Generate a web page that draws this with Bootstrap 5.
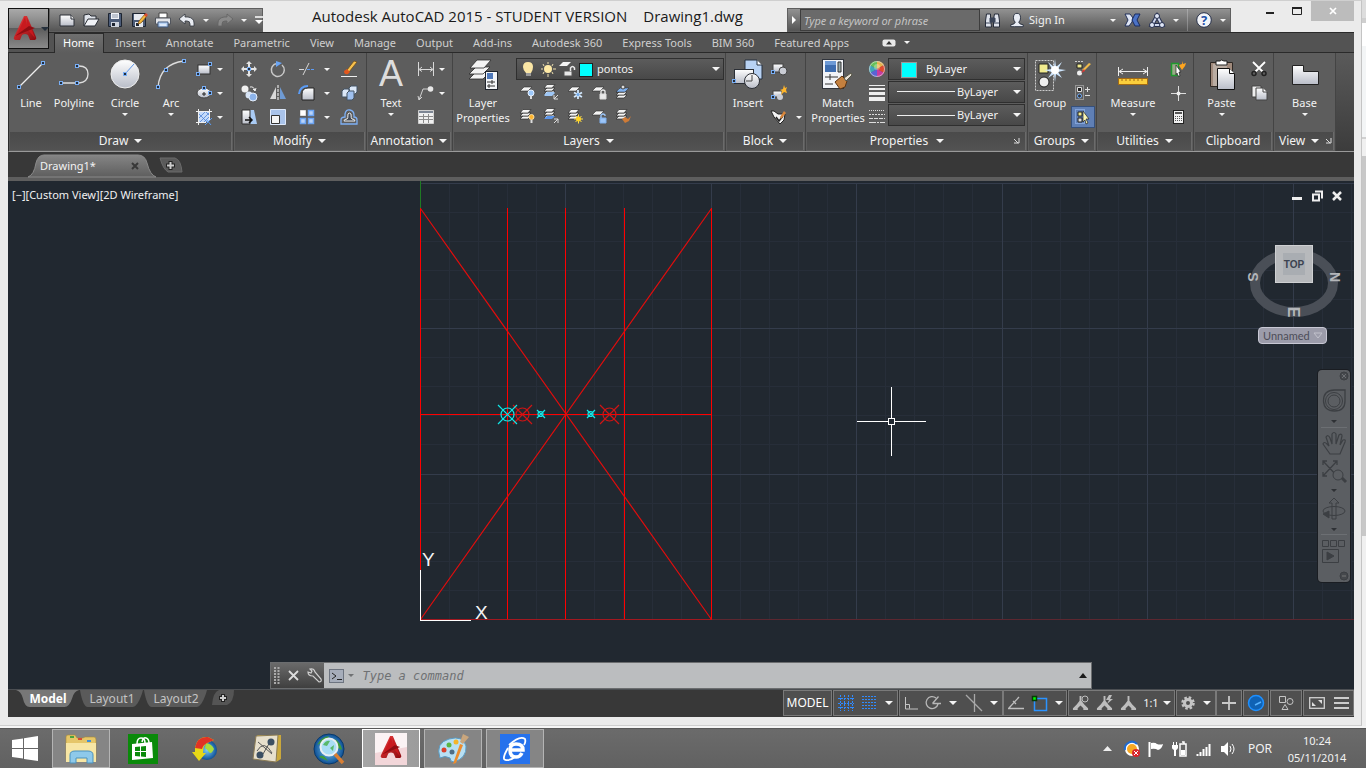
<!DOCTYPE html>
<html lang="en">
<head>
<meta charset="utf-8">
<meta name="viewport" content="width=device-width, initial-scale=1">
<title>Autodesk AutoCAD 2015 - Drawing1.dwg</title>
<link href="https://cdn.jsdelivr.net/npm/bootstrap@5.3.0/dist/css/bootstrap.min.css" rel="stylesheet">
<style>
  body{font-family:"Noto Sans","Open Sans",sans-serif;font-size:11px;line-height:16px;color:#f2f2f2;background:#ebebeb}
  button{background:none;border:0;padding:0;color:inherit;font:inherit}
  svg{display:block;flex:none;overflow:visible}
  .i16{width:16px;height:16px}
  .i32{width:32px;height:32px}
  .t12{font-size:12px}
  .car{width:0;height:0;border:3px solid transparent;border-top:3px solid #f4f4f4;border-bottom:0;flex:none}
  .car-lg{border-width:4px;border-top-width:4px;border-bottom-width:0}
  .open-sans{font-family:"Open Sans","Noto Sans",sans-serif}
  /* window frame */
  .frame{background:#ebebeb;border-top:1px solid #cfcfcf;border-right:1px solid #c4c4c4;padding:0 7px 8px 8px;border-bottom:1px solid #cfcfcf}
  .edge{width:4px;background:linear-gradient(#ddd 0 18px,#cfcfcf 18px 23px,#fff 23px 46px,#f3f5f6 46px 137px,#d0d0d0 137px 139px,#f0f0f0 139px 156px,#c8c8c8 156px 536px,#f0f0f0 536px)}
  .titlebar{height:31px}
  .barfill{background:linear-gradient(#929292,#555);border:1px solid #5f5f5f;height:24px}
  .qat{margin-left:41px;width:214px;padding-left:9px;gap:8px}
  .wintitle{font-size:15px;line-height:20px;color:#1a1a1a;padding:5px 0 0 49px;gap:16px}
  .info{width:444px}
  .search{width:180px;height:22px;background:#6a6a6a;border:1px solid #3d3d3d;color:#ddd;font-style:italic;padding:0 3px;border-radius:0}
  .search::placeholder{color:#c4c4c4;opacity:1}
  .winbtns{width:123px}
  .winclose{width:44px;height:20px;background:#bcbcbc}
  .appbtn{left:0;top:7px;width:41px;height:41px;background:linear-gradient(#a9a9a9,#7b7b7b 50%,#5c5c5c 50%,#8a8a8a);border:1px solid #111;z-index:3}
  /* ribbon */
  .rtabs{height:21px;background:#535353;border-top:1px solid #2a2a2a;border-bottom:1px solid #2a2a2a;padding-left:46px}
  .rtabs a{color:#cfcfcf;text-decoration:none;padding:2px 9px 0 11px;height:20px;white-space:nowrap}
  .rtabs a.on{color:#fff;background:linear-gradient(#6f6f6f,#5d5d5d);border:1px solid #2a2a2a;border-bottom:0;padding:1px 9px 0 8px}
  .ribbon{height:99px;background:linear-gradient(#5a5a5a,#3c3c3c);border-bottom:1px solid #9a9a9a;border-left:1px solid #2c2c2c}
  .panel{background:#5d5d5d;border-right:1px solid #444;flex:none;padding:2px 1px 1px}
  .pbody{height:77px}
  .ptitle{height:18px;background:linear-gradient(#4a4a4a,#525252);gap:6px;border-right:1px solid #6b6b6b;font-size:12px}
  .big{display:flex;flex-direction:column;align-items:center;padding-top:4px;white-space:nowrap;flex:none}
  .big .lbl{margin-top:4px;line-height:15px;text-align:center}
  .big .car{margin-top:3px}
  .tools{display:grid;grid-auto-rows:24px;align-items:center;padding-top:2px;align-content:start}
  .tools button{height:24px;display:flex;align-items:center;gap:5px}
  .combo{position:relative;background:linear-gradient(#5c5c5c,#484848);border:1px solid #2f2f2f;height:22px}
  .combo select{appearance:none;background:none;border:0;color:#f2f2f2;width:100%;height:20px;font:inherit;padding:0;display:block}
  .combo .car{position:absolute;right:3px;top:8px}
  .combo .deco{position:absolute;left:6px;top:2px;pointer-events:none}
  .w42{width:42px}.w44{width:44px}.w34{width:34px}.w58{width:58px}
  .p-draw{width:225px}.p-mod{width:133px}.p-ann{width:86px}.p-lay{width:273px}.p-blk{width:80px}.p-prop{width:222px}.p-grp{width:69px}.p-util{width:97px}.p-clip{width:80px}.p-view{width:62px}
  .hot{background:#5f7fb5;border:1px solid #35507c!important;width:24px;height:22px!important;justify-content:center}
  /* file tabs */
  .ftabs{height:25px;background:#383838;padding:3px 0 0 20px}
  .ftab{position:relative;height:22px;width:128px}
  .ftab .shape,.ltab .shape{position:absolute;inset:0;width:100%;height:100%}
  .ftab .inner{position:relative;padding:3px 13px 0 12px}
  .strip{height:4px;background:#5e5e5e}
  /* canvas */
  .paper{position:relative;background:#212830;overflow:hidden;min-height:440px}
  .draw{position:absolute;inset:0;width:100%;height:100%}
  .vlabel{position:absolute;left:4px;top:6px;color:#f0f0f0}
  .mdi{position:absolute;right:11px;top:9px;gap:8px}
  .cube{position:absolute;right:10px;top:60px}
  .ucsname{position:absolute;right:27px;top:146px;width:69px;height:17px;border:1px solid #c8c8d4;border-radius:4px;background:#9c9caa;color:#4d4d58;font:11px/14px "Lato",sans-serif;padding:0 4px}
  .navbar2{position:absolute;right:4px;top:189px;width:32px;height:212px;background:#5b5e62;border-radius:4px;box-shadow:0 0 0 1px #1a1d22}
  .cmdwrap{position:absolute;left:0;right:0;bottom:0}
  .cmd{width:61%;height:27px;border:1px solid #6b6d6f}
  .cmdleft{width:53px;background:linear-gradient(#6a6a6a,#3f3f3f);gap:5px;padding-left:3px}
  .cmdin{background:#bbbdbf;padding:0 4px 0 5px}
  .cmdin input{background:none;border:0;outline:0;font:italic 12px "DejaVu Sans Mono",monospace;color:#444;padding:0}
  .cmdin input::placeholder{color:#6f7173;opacity:1}
  /* status */
  .status{height:28px;background:#383838;border-top:1px solid #4b4e52}
  .ltab{position:relative;height:17px;width:64px;color:#c4c4c4;text-align:center}
  .ltab span{position:relative}
  .sgrp{height:26px;border:1px solid #7a7a7a;background:#4f4f4f;display:flex;align-items:center;justify-content:space-around;margin-right:1px}
  .sgrp button{flex:none}
  /* taskbar */
  .taskbar{height:40px;background:linear-gradient(#6b6b6b,#616161);border-top:1px solid #585858}
  .gapline{height:2px;background:#f5f5f5}
  .tb{width:58px;height:39px;margin-right:4px;display:flex;align-items:center;justify-content:center}
  .tb.run{background:#858585;border:1px solid #b4b4b4}
  .tb.act{background:linear-gradient(90deg,#a5a5a5,#9c9c9c);border:1px solid #fff}
  .startb{width:52px}
  .tray{gap:8px;padding-right:16px}
  .clock{width:66px;text-align:center;line-height:17px}
</style>
</head>
<body class="vh-100 d-flex flex-column overflow-hidden">
<svg width="0" height="0" class="position-absolute" aria-hidden="true">
  <defs>
    <linearGradient id="gw" x1="0" y1="0" x2="0" y2="1"><stop offset="0" stop-color="#fff"/><stop offset="1" stop-color="#b9bdc8"/></linearGradient>
    <linearGradient id="gt" x1="0" y1="0" x2="0" y2="1"><stop offset="0" stop-color="#858585"/><stop offset="1" stop-color="#5e5e5e"/></linearGradient>
    <linearGradient id="gr" x1="0" y1="0" x2="1" y2="1"><stop offset="0" stop-color="#f04040"/><stop offset="1" stop-color="#8c0a0f"/></linearGradient>
    <radialGradient id="globe"><stop offset="0" stop-color="#7fd0f5"/><stop offset="1" stop-color="#0d4f96"/></radialGradient>
    <symbol id="h" viewBox="0 0 4 4"><rect x=".5" y=".5" width="3" height="3" fill="#222d3c" stroke="#78aef5"/></symbol>
    <symbol id="sheet" viewBox="0 0 16 16"><path d="M5 3h8l-4 4H1z" fill="#f4f4f4" stroke="#2b2b2b" stroke-width=".6"/></symbol>
    <symbol id="stack" viewBox="0 0 16 16"><path d="M4 8h8l-3 3H1z" fill="#f4f4f4" stroke="#2b2b2b" stroke-width=".7"/><path d="M4 5h8l-3 3H1z" fill="#f4f4f4" stroke="#2b2b2b" stroke-width=".7"/><path d="M4 1.500h8l-3 3.500H1z" fill="#f4f4f4" stroke="#2b2b2b" stroke-width=".7"/></symbol>
    <symbol id="acad" viewBox="0 0 24 26"><path d="M11 0h3l9 21q1 2-1 3h-5l-2-5q-3-2-6 0l-2 5H2q-2-1-1-3z" fill="url(#gr)"/><path d="M12 1l2 9-6 7-6 6 6-13zM14 2l8 20-8-9z" fill="#c9191e"/><path d="M2 20l20-8-6-2z" fill="#8f0d12"/></symbol>
    <symbol id="person" viewBox="0 0 18 17"><path d="M6 16H2v-2q5-1 5-3Q5 9 5 6q0-5 4-5t4 5q0 3-2 5 0 2 5 3v2z" fill="#e9edf5" stroke="#222a3a"/></symbol>
    <symbol id="compass" viewBox="0 0 18 18"><path d="M8 1h2v5l3 4 4 4v2h-5v-2l-3-3-3 3v2H1v-2l4-4 3-4z" fill="#bdbdbd"/></symbol>
  </defs>
</svg>

<div class="d-flex flex-grow-1 overflow-hidden">
<main class="frame flex-grow-1 d-flex flex-column position-relative">
  <div class="position-relative">
  <button class="appbtn position-absolute d-flex align-items-center" aria-label="Application menu">
    <svg width="24" height="26" class="ms-1"><use href="#acad"/></svg><i class="car car-lg ms-1" style="border-top-color:#25303c"></i>
  </button>
  <header class="titlebar d-flex">
    <div class="qat barfill d-flex align-items-center align-self-end">
      <button aria-label="New"><svg class="i16" viewBox="0 0 16 16"><path d="M1 3h11l3 4v7H1z" fill="url(#gw)" stroke="#2b2f36"/><path d="M12 3v4h3" fill="#fff" stroke="#2b2f36"/></svg></button>
      <button aria-label="Open"><svg class="i16" viewBox="0 0 16 16"><path d="M1 14V3l5-1 2 2h5v4" fill="#dfe3ea" stroke="#2b2f36"/><path d="M1 14l4-7h11l-4 7z" fill="#f0f2f6" stroke="#2b2f36"/></svg></button>
      <button aria-label="Save"><svg class="i16" viewBox="0 0 16 16"><path d="M1.500 1.500h13v13h-13z" fill="#4c5c78" stroke="#1d2430"/><path d="M4 1h8v6H4z" fill="#f0f2f6"/><path d="M5 3h6M5 5h6" stroke="#8c96a8"/><path d="M4 10h8v5H4z" fill="#cdd3de"/><path d="M5 11h3v3H5z" fill="#1d2430"/></svg></button>
      <button aria-label="Save as"><svg class="i16" viewBox="0 0 16 16"><path d="M1.500 1.500h13v13h-13z" fill="#4c5c78" stroke="#1d2430"/><path d="M3 2h10v6H3zM4 10h8v5H4z" fill="#e6e9ef"/><path d="M5 11h3v3H5z" fill="#1d2430"/><path d="M7 12l1-3 6-7 2 2-6 7z" fill="#f3b63c" stroke="#7a4a10" stroke-width=".7"/><path d="M13 3l2-2 2 2-2 2z" fill="#d84b31"/></svg></button>
      <button aria-label="Plot"><svg class="i16" viewBox="0 0 16 16"><path d="M4 1h8v5H4z" fill="#fff" stroke="#444"/><path d="M.5 6h15v6H.5z" fill="#e4e6ea" stroke="#50545c"/><path d="M3 10h10v5H3z" fill="#b9d4f6" stroke="#40587c"/><path d="M5 13h6" stroke="#fff"/></svg></button>
      <button aria-label="Undo"><svg class="i16" viewBox="0 0 16 16"><path d="M0 7l6-5v3h3q6 1 6 6v3h-4v-2q0-3-3-3H6v3z" fill="#e9ecf2" stroke="#30353e" stroke-width=".8"/></svg></button>
      <i class="car"></i>
      <button aria-label="Redo"><svg class="i16" viewBox="0 0 16 16"><path d="M16 7l-6-5v3H7q-6 1-6 6v3h4v-2q0-3 3-3h2v3z" fill="#8a8a8a" stroke="#626262" stroke-width=".8"/></svg></button>
      <i class="car"></i>
      <button aria-label="Customize"><svg width="8" height="8"><path d="M0 1h8" stroke="#fff" stroke-width="1.500"/><path d="M0 4h8l-4 4z" fill="#fff"/></svg></button>
    </div>
    <div class="wintitle open-sans flex-grow-1 d-flex text-nowrap"><span>Autodesk AutoCAD 2015 - STUDENT VERSION</span><span>Drawing1.dwg</span></div>
    <div class="info barfill d-flex align-items-center align-self-end">
      <svg width="12" height="10" viewBox="0 0 12 10"><path d="M4 1l4 4-4 4z" fill="#fff"/></svg>
      <input class="search" type="text" placeholder="Type a keyword or phrase" aria-label="Search">
      <button class="ms-1" aria-label="Find"><svg width="17" height="16" viewBox="0 0 17 16"><path d="M2.500 2h4v5l1 8h-6V9zM10.500 2h4l1 7v6h-6V7z" fill="#dfe3ec" stroke="#262c3a"/><path d="M6 6h5v4H6zM2 11h5M10 11h5" fill="#3b4558" stroke="#3b4558"/></svg></button>
      <button class="d-flex align-items-center ms-2"><svg width="16" height="16"><use href="#person"/></svg><span class="ms-1 text-nowrap">Sign In</span></button>
      <i class="car ms-auto"></i>
      <button class="ms-2" aria-label="Exchange"><svg width="17" height="14" viewBox="0 0 17 14"><path d="M1 1h5l3 4-1 4-3 4H1l3-6z" fill="#dfe6f5" stroke="#22305a"/><path d="M16 1h-5L8 7l3 6h5l-3-6z" fill="#4b72c6" stroke="#1b2c60"/></svg></button>
      <button class="ms-2" aria-label="Stay connected"><svg width="16" height="15" viewBox="0 0 16 15"><path d="M8 3l5 9H3z" fill="none" stroke="#262f4e" stroke-width="4"/><path d="M8 3l5 9H3z" fill="none" stroke="#cfd8ee" stroke-width="2"/><circle cx="8" cy="3" r="2.500" fill="#dfe6f5" stroke="#262f4e"/><circle cx="3" cy="12" r="2.500" fill="#dfe6f5" stroke="#262f4e"/><circle cx="13" cy="12" r="2.500" fill="#dfe6f5" stroke="#262f4e"/></svg></button>
      <i class="car ms-2"></i><span class="vr mx-2 bg-light"></span>
      <button aria-label="Help"><svg width="16" height="16" viewBox="0 0 16 16"><circle cx="8" cy="8" r="7.300" fill="#f2f4f8" stroke="#26304a"/><text x="8" y="13" text-anchor="middle" font-size="13" font-weight="700" fill="#1d50a8">?</text></svg></button>
      <i class="car ms-2 me-1"></i>
    </div>
    <div class="winbtns d-flex justify-content-end">
      <svg width="80" height="20" viewBox="0 0 80 20"><path d="M35 12h8" stroke="#222" stroke-width="2"/><path d="M61.500 6.500h9v7h-9z" fill="none" stroke="#222"/><path d="M61 7h10" stroke="#222" stroke-width="2"/></svg>
      <button class="winclose d-flex align-items-center justify-content-center" aria-label="Close"><svg width="8" height="8"><path d="M1 1l6 6M7 1l-6 6" stroke="#fff" stroke-width="1.700"/></svg></button>
    </div>
  </header>
  <nav class="rtabs d-flex">
    <a href="#" class="on">Home</a><a href="#">Insert</a><a href="#">Annotate</a><a href="#">Parametric</a><a href="#">View</a><a href="#">Manage</a><a href="#">Output</a><a href="#">Add-ins</a><a href="#">Autodesk 360</a><a href="#">Express Tools</a><a href="#">BIM 360</a><a href="#">Featured Apps</a>
    <button class="d-flex align-items-center gap-2 ms-4" aria-label="Minimize ribbon"><svg width="14" height="8"><rect x=".5" y=".5" width="13" height="7" rx="2" fill="#e8e8e8"/><path d="M4 5.500h6L7 2z" fill="#333"/></svg><i class="car"></i></button>
  </nav>
  </div>

  <section class="ribbon d-flex">
    <div class="panel p-draw"><div class="pbody d-flex">
      <button class="big w42"><svg class="i32" viewBox="0 0 32 32"><path d="M4 28L28 4" stroke="#eee" stroke-width="1.300"/><use href="#h" x="2" y="26" width="4" height="4"/><use href="#h" x="26" y="2" width="4" height="4"/></svg><span class="lbl">Line</span></button>
      <button class="big w44"><svg class="i32" viewBox="0 0 32 32"><path d="M4 24h17q9-1 9-9t-9-8h-2" fill="none" stroke="#ddd" stroke-width="1.300"/><use href="#h" x="1" y="22" width="4" height="4"/><use href="#h" x="17" y="22" width="4" height="4"/><use href="#h" x="17" y="5" width="4" height="4"/></svg><span class="lbl">Polyline</span></button>
      <button class="big w58"><svg class="i32" viewBox="0 0 32 32"><circle cx="16" cy="15" r="14" fill="url(#gw)" stroke="#eee"/><path d="M16 15l9-10" stroke="#5b95e8"/><use href="#h" x="14" y="13" width="4" height="4"/></svg><span class="lbl">Circle</span><i class="car"></i></button>
      <button class="big w34"><svg class="i32" viewBox="0 0 32 32"><path d="M3 28Q5 5 29 2" fill="none" stroke="#ddd" stroke-width="1.300"/><use href="#h" x="1" y="26" width="4" height="4"/><use href="#h" x="9" y="9" width="4" height="4"/><use href="#h" x="27" y="0" width="4" height="4"/></svg><span class="lbl">Arc</span><i class="car"></i></button>
      <div class="tools ms-2">
        <button aria-label="Rectangle"><svg class="i16" viewBox="0 0 16 16"><rect x="2" y="4" width="12" height="9" fill="url(#gw)" stroke="#333"/><use href="#h" x="0" y="11" width="4" height="4"/><use href="#h" x="12" y="1" width="4" height="4"/></svg><i class="car"></i></button>
        <button aria-label="Ellipse"><svg class="i16" viewBox="0 0 16 16"><ellipse cx="8" cy="8" rx="7" ry="5" fill="url(#gw)" stroke="#444"/><path d="M6 9h4M8 7v4" stroke="#222"/><use href="#h" x="6" y="1" width="4" height="4"/><use href="#h" x="12" y="6" width="4" height="4"/></svg><i class="car"></i></button>
        <button aria-label="Hatch"><svg class="i16" viewBox="0 0 16 16"><path d="M3 3h10v10H3z" fill="#c5dbfa"/><path d="M3 9l6-6M4 13l9-9M8 13l5-5M10 3l3 3M3 5l8 8" stroke="#3f78d0" stroke-width=".7"/><path d="M2.500 0v16M13.500 0v12M0 2.500h16M0 13.500h10" stroke="#f0f0f0" fill="none"/><path d="M9 16l7-7M10 10l5 6" stroke="#5b9cf0"/></svg><i class="car"></i></button>
      </div></div>
      <div class="ptitle d-flex align-items-center justify-content-center">Draw<i class="car car-lg"></i></div></div>

    <div class="panel p-mod"><div class="pbody tools" style="grid-template-columns:29px 29px 42px 20px;padding-left:6px">
      <button aria-label="Move"><svg class="i16" viewBox="0 0 16 16"><path d="M8 0l3 3H9v3H7V3H5zM8 16l3-3H9v-3H7v3H5zM0 8l3-3v2h3v2H3v2zM16 8l-3-3v2h-3v2h3v2z" fill="#e4e4e4"/><use href="#h" x="6" y="6" width="4" height="4"/></svg></button>
      <button aria-label="Rotate"><svg class="i16" viewBox="0 0 16 16"><path d="M7 2.500A6.500 6.500 0 1 0 12 4" fill="none" stroke="#c9c9c9" stroke-width="1.500"/><path d="M6 0l6 2-6 4z" fill="#6aa5f5"/></svg></button>
      <button aria-label="Trim"><svg class="i16" viewBox="0 0 16 16"><path d="M0 8.500h5M4 14L10 2" stroke="#d8d8d8"/><path d="M8 8.500h8" stroke="#5d9cf5" stroke-dasharray="3 1"/></svg><i class="car ms-1"></i></button>
      <button aria-label="Erase"><svg class="i16" viewBox="0 0 16 16"><path d="M6 9L13 0l3 1-8 10z" fill="#f7c14d" stroke="#6b4714" stroke-width=".7"/><path d="M3 10l3-2 3 3-2 2q-4 1-4-3z" fill="#e2571d"/><path d="M0 15.500h16" stroke="#eee"/></svg></button>
      <button aria-label="Copy"><svg class="i16" viewBox="0 0 16 16"><circle cx="4" cy="4" r="3.500" fill="#f0f0f0"/><circle cx="8" cy="10" r="3.500" fill="#d7e4f5"/><circle cx="12" cy="12" r="4" fill="#8db4ea" stroke="#e3edfb"/><path d="M9 2q4-1 5 4M12 4l2 2 1-3" fill="none" stroke="#eee"/></svg></button>
      <button aria-label="Mirror"><svg class="i16" viewBox="0 0 16 16"><path d="M6 2v12H0z" fill="#d9d9d9"/><path d="M10 2v12h6z" fill="#6f9bd4"/><path d="M8 0v16" stroke="#fff" stroke-dasharray="3 1"/></svg></button>
      <button aria-label="Fillet"><svg class="i16" viewBox="0 0 16 16"><path d="M3 15V9q0-6 6-6h6v12z" fill="url(#gw)" stroke="#222"/><path d="M0 9Q1 1 9 1" fill="none" stroke="#5b9cf5" stroke-width="2"/></svg><i class="car ms-1"></i></button>
      <button aria-label="Explode"><svg class="i16" viewBox="0 0 16 16"><path d="M1 6l2-2h5v6l-2 2H1zM8 3l2-2h6v6l-2 2H9z" fill="#dce8f8" stroke="#456"/><path d="M6 8l2-2h5v7l-2 2H6z" fill="#9fc0ee" stroke="#456"/></svg></button>
      <button aria-label="Stretch"><svg class="i16" viewBox="0 0 16 16"><path d="M9 1h4l3 14H9z" fill="#a9caf3"/><path d="M1 1h8v14H1z" fill="url(#gw)" stroke="#333"/><path d="M4 11h6M8 8l3 3-3 3" fill="none" stroke="#111" stroke-width="1.500"/></svg></button>
      <button aria-label="Scale"><svg class="i16" viewBox="0 0 16 16"><path d="M.5.500h15v15H.5z" fill="#a9c3ea" stroke="#dde8fa"/><path d="M1.500 6.500h8v8h-8z" fill="#f4f4f4" stroke="#333"/></svg></button>
      <button aria-label="Array"><svg class="i16" viewBox="0 0 16 16"><path d="M1.500 1.500h5v5h-5z" fill="#fff" stroke="#ddd"/><path d="M9.500 1.500h5v5h-5zM1.500 9.500h5v5h-5zM9.500 9.500h5v5h-5z" fill="#b9d3f8" stroke="#6ba4f2" stroke-width="1.500"/></svg><i class="car ms-1"></i></button>
      <button aria-label="Offset"><svg class="i16" viewBox="0 0 16 16"><path d="M0 15v-4q0-3 4-3V5q1-5 5-4t4 5v2q3 0 3 3v4z" fill="none" stroke="#7eb0f5" stroke-width="1.300"/><path d="M3 12q0-2 3-2 1 0 1-5 1-2 3 0 0 5 1 5 3 0 3 2z" fill="#424a56" stroke="#eee"/></svg></button>
      </div>
      <div class="ptitle d-flex align-items-center justify-content-center">Modify<i class="car car-lg"></i></div></div>

    <div class="panel p-ann"><div class="pbody d-flex">
      <button class="big" style="width:46px"><svg class="i32" viewBox="0 0 32 32"><text x="16" y="27" text-anchor="middle" font-family="Liberation Sans, sans-serif" font-size="36" fill="#ddd">A</text></svg><span class="lbl">Text</span><i class="car"></i></button>
      <div class="tools ms-1">
        <button aria-label="Dimension"><svg class="i16" viewBox="0 0 16 16"><path d="M.5 1v14M15.500 1v14M2 8.500h12M4 6L1 8.500l3 2M12 6l3 2.500-3 2" fill="none" stroke="#d8d8d8"/></svg><i class="car"></i></button>
        <button aria-label="Leader"><svg class="i16" viewBox="0 0 16 16"><path d="M1 15L5 4h5M0 11l1 4 3-3" fill="none" stroke="#d0d0d0"/><circle cx="12.500" cy="4" r="2.800" fill="#e8e8e8"/></svg><i class="car"></i></button>
        <button aria-label="Table"><svg class="i16" viewBox="0 0 16 16"><path d="M.5 1.500h15v13H.5z" fill="#f0f0f0" stroke="#d0d0d0"/><path d="M1 2h14v2H1z" fill="#7d8694"/><path d="M1 7.500h14M1 10.500h14M5.500 5v9M10.500 5v9" stroke="#8b8b8b"/></svg></button>
      </div></div>
      <div class="ptitle d-flex align-items-center justify-content-center">Annotation<i class="car car-lg"></i></div></div>

    <div class="panel p-lay"><div class="pbody d-flex">
      <button class="big w58 me-1"><svg class="i32" viewBox="0 0 32 32"><g fill="#f4f4f4" stroke="#2b2b2b" stroke-width=".8"><path d="M9 13h14l-7 7H2z"/><path d="M9 8h14l-7 7H2z"/><path d="M10 1h14l-7 8H3z"/></g><rect x="18.500" y="12.500" width="12" height="18" fill="#f3f5f8" stroke="#1f242d"/><path d="M20 14h6v6h-6z" fill="#4f79bb"/><path d="M20 23h8M20 27h8M25 21v4M22 25v4" stroke="#333"/></svg><span class="lbl">Layer<br>Properties</span></button>
      <div>
        <div class="combo" style="width:208px;margin-top:3px"><select aria-label="Layer" style="padding-left:80px"><option>pontos</option></select>
          <span class="deco"><svg width="76" height="17" viewBox="0 0 76 17"><path d="M5 1q5 0 5 5 0 3-2 6H3Q0 9 0 6q0-5 5-5z" fill="#fbe6a5"/><path d="M3 12h5v3H3z" fill="#999"/><circle cx="25" cy="8" r="4" fill="#ffeaa6"/><path d="M25 1v2M25 13v3M18 8h2M30 8h3M20 3l1 2M30 3l-1 2M20 13l1-2M30 13l-1-2" stroke="#eee0b0"/><path d="M40 1h8l-4 4h-8z" fill="#f4f4f4"/><path d="M41 10h8v5h-8z" fill="#e8e8e8" stroke="#555"/><path d="M47.500 10V7q2-3 4 0v2" fill="none" stroke="#e8e8e8" stroke-width="1.500"/><rect x="56.500" y="2.500" width="13" height="13" fill="#0ff" stroke="#222"/></svg></span><i class="car car-lg"></i></div>
        <div class="tools p-0" style="grid-template-columns:repeat(5,24px);padding-left:3px!important">
          <button aria-label="Off"><svg class="i16" viewBox="0 0 16 16"><use href="#sheet"/><circle cx="12" cy="9" r="3" fill="#9cc8fa" stroke="#e8f2ff"/><path d="M11 12h2v3h-2z" fill="#ddd"/></svg></button>
          <button aria-label="Isolate"><svg class="i16" viewBox="0 0 16 16"><path d="M4 9h8l-3 3H1z" fill="#9fc7f5"/><use href="#stack" y="-1"/><path d="M4 8h8l-3 3H1z" fill="#9fc7f5"/><path d="M15 11l-4 4M11 11v4h4" stroke="#ddd" fill="none"/></svg></button>
          <button aria-label="Freeze"><svg class="i16" viewBox="0 0 16 16"><use href="#sheet"/><path d="M11 6v9M7 8.500l8 4.500M7 13l8-4.500" stroke="#d3e9ff" stroke-width="1.800"/><circle cx="11" cy="10.500" r="1.500" fill="#6fa8ea"/></svg></button>
          <button aria-label="Lock"><svg class="i16" viewBox="0 0 16 16"><use href="#sheet"/><path d="M9 10h6v5H9z" fill="#e8e8e8" stroke="#ddd"/><path d="M10 10V7q2-2 4 0v3" fill="none" stroke="#e8e8e8" stroke-width="1.300"/></svg></button>
          <button aria-label="Make current"><svg class="i16" viewBox="0 0 16 16"><use href="#stack" y="3"/><path d="M5 4h9l-4 4H1z" fill="#7fb0ee" stroke="#2b2b2b" stroke-width=".5"/><circle cx="8" cy="3" r="2" fill="#ddd" stroke="#444"/></svg></button>
          <button aria-label="On"><svg class="i16" viewBox="0 0 16 16"><use href="#stack"/><circle cx="12.500" cy="9" r="2.500" fill="#ffb52e" stroke="#ffe0a0"/><path d="M11.500 12h2v3h-2z" fill="#ddd"/></svg></button>
          <button aria-label="Unisolate"><svg class="i16" viewBox="0 0 16 16"><use href="#stack" y="-1"/><path d="M4 8h8l-3 3H1z" fill="#5b95ea"/><path d="M11 15l4-4M11 11h4v4" stroke="#ddd" fill="none"/></svg></button>
          <button aria-label="Thaw"><svg class="i16" viewBox="0 0 16 16"><use href="#stack"/><path d="M11.500 6.500v9M7 11h9M8.500 8l6 6M14.500 8l-6 6" stroke="#ffe04f"/><circle cx="11.500" cy="11" r="2.500" fill="#ffd21f"/></svg></button>
          <button aria-label="Unlock"><svg class="i16" viewBox="0 0 16 16"><use href="#sheet"/><path d="M9 10h6v5H9z" fill="#9cc5f7" stroke="#7fb0ee"/><path d="M10 10V7q2-2 4 0v1" fill="none" stroke="#9cc5f7" stroke-width="1.300"/></svg></button>
          <button aria-label="Match layer"><svg class="i16" viewBox="0 0 16 16"><use href="#stack"/><path d="M7 11l3-2 3 2 3-3-2 5-4 2z" fill="#cf7b36"/></svg></button>
        </div>
      </div></div>
      <div class="ptitle d-flex align-items-center justify-content-center">Layers<i class="car car-lg"></i></div></div>

    <div class="panel p-blk"><div class="pbody d-flex">
      <button class="big w42"><svg class="i32" viewBox="0 0 32 32"><path d="M13 1h12l5 5v14H13z" fill="#b8d2f4" stroke="#26303e"/><path d="M25 1v5h5" fill="#fff" stroke="#26303e"/><rect x="2.500" y="10.500" width="19" height="14" fill="url(#gw)" stroke="#2b2f36"/><circle cx="20" cy="22" r="7.500" fill="url(#gw)" stroke="#2b2f36"/><path d="M20 22v-6M20 22h-6" stroke="#444"/><use href="#h" x="0" y="20" width="4" height="4"/></svg><span class="lbl">Insert</span></button>
      <div class="tools" style="padding-left:2px">
        <button aria-label="Create block"><svg class="i16" viewBox="0 0 16 16"><rect x="2" y="3" width="10" height="8" fill="url(#gw)" stroke="#444"/><circle cx="12" cy="10" r="4" fill="#c9ccd4" stroke="#444"/><use href="#h" x="0" y="9" width="4" height="4"/></svg></button>
        <button aria-label="Edit block"><svg class="i16" viewBox="0 0 16 16"><rect x="2" y="6" width="9" height="6" fill="url(#gw)" stroke="#444"/><circle cx="9" cy="12" r="3" fill="#c9ccd4"/><use href="#h" x="0" y="10" width="4" height="4"/><path d="M13 0l1 3 2-1-1 3 1 3-3-1-3 3 1-4-2-1 3-1z" fill="#ffb52a"/></svg></button>
        <button aria-label="Attributes"><svg class="i16" viewBox="0 0 16 16"><path d="M0 2h3l4 3h7l-1 6-4 4-6-7z" fill="#f4f4f4" stroke="#222"/><path d="M5 8l3 4 4-5" stroke="#222" fill="none" stroke-width="1.500"/><path d="M9 8l4-6 2 2-5 6z" fill="#d9863a"/></svg><i class="car ms-1"></i></button>
      </div></div>
      <div class="ptitle d-flex align-items-center justify-content-center">Block<i class="car car-lg"></i></div></div>

    <div class="panel p-prop"><div class="pbody d-flex">
      <button class="big" style="width:62px"><svg class="i32" viewBox="0 0 32 32"><rect x=".5" y=".5" width="21" height="29" fill="#f1f3f7" stroke="#30343c"/><path d="M3 2h11v11H3z" fill="#3d6db0"/><path d="M3 2h11v4H3z" fill="#6d9ad6"/><path d="M16 3h3v10h-3zM3 18h13M8 15v6M3 25h8" fill="#9aa" stroke="#333"/><path d="M13 23l7-6 5 5-2 6-5 2z" fill="#c4803f" stroke="#5d3411"/><path d="M22 19l7-5 1 2-6 6z" fill="#e7e0d6" stroke="#554"/></svg><span class="lbl">Match<br>Properties</span></button>
      <div class="tools p-0" style="margin-top:2px"><svg class="i16 my-auto" viewBox="0 0 16 16"><path d="M8 8V0a8 8 0 0 1 7 4z" fill="#e9b24a"/><path d="M8 8l7-4a8 8 0 0 1 0 8z" fill="#e04a2f"/><path d="M8 8l7 4a8 8 0 0 1-7 4z" fill="#c93ba0"/><path d="M8 8v8a8 8 0 0 1-7-4z" fill="#5a63d6"/><path d="M8 8l-7 4a8 8 0 0 1 0-8z" fill="#3fa6b9"/><path d="M8 8L1 4a8 8 0 0 1 7-4z" fill="#66c158"/><circle cx="8" cy="8" r="7.500" fill="none" stroke="#d5d5d5" stroke-width=".7"/><circle cx="8" cy="6" r="3" fill="#fff" opacity=".3"/></svg>
      <svg class="i16" viewBox="0 0 16 16"><path d="M0 .5h16" stroke="#eee"/><path d="M0 4h16" stroke="#eee" stroke-width="2"/><path d="M0 8.500h16" stroke="#eee" stroke-width="3"/><path d="M0 14h16" stroke="#eee" stroke-width="4"/></svg>
      <svg class="i16" viewBox="0 0 16 16"><path d="M0 1.500h16" stroke="#ddd" stroke-dasharray="1 1"/><path d="M0 5.500h16" stroke="#ddd" stroke-dasharray="2 1"/><path d="M0 9.500h16" stroke="#ddd" stroke-dasharray="4 1"/><path d="M0 13.500h16" stroke="#ddd" stroke-dasharray="7 1 2 1"/></svg></div>
      <div class="d-grid align-content-start" style="width:137px;gap:1px;margin:3px 0 0 3px">
        <div class="combo"><select aria-label="Color" style="padding-left:37px"><option>ByLayer</option></select><span class="deco"><svg width="28" height="17"><rect x="6.500" y="1.500" width="15" height="15" fill="#0ff" stroke="#999"/></svg></span><i class="car car-lg"></i></div>
        <div class="combo"><select aria-label="Lineweight" style="padding-left:68px"><option>ByLayer</option></select><span class="deco"><svg width="60" height="16"><path d="M2 7.500h58" stroke="#eee"/></svg></span><i class="car car-lg"></i></div>
        <div class="combo"><select aria-label="Linetype" style="padding-left:68px"><option>ByLayer</option></select><span class="deco"><svg width="60" height="16"><path d="M2 8.500h58" stroke="#eee"/></svg></span><i class="car car-lg"></i></div>
      </div></div>
      <div class="ptitle d-flex align-items-center"><span class="flex-grow-1 d-flex align-items-center justify-content-center gap-2">Properties<i class="car car-lg"></i></span><svg width="8" height="8" class="me-1"><path d="M1 2l4 4M6 1v5H1" stroke="#ddd" fill="none"/></svg></div></div>

    <div class="panel p-grp"><div class="pbody d-flex">
      <button class="big w42"><svg class="i32" viewBox="0 0 32 32"><path d="M1.500 1.500h18v30h-18z" fill="none" stroke="#ccc" stroke-dasharray="2 1"/><path d="M5 5h9v9H5z" fill="#f1eb8e" stroke="#222"/><circle cx="10" cy="23" r="5" fill="#eee" stroke="#222"/><path d="M21 0l1 8 6-5-4 7 8 1-8 2 4 6-6-4-1 8-1-8-6 4 4-6-8-2 8-1-4-7 6 5z" fill="#cfe7ff"/><circle cx="21" cy="11" r="4" fill="#fff"/></svg><span class="lbl">Group</span></button>
      <div class="tools">
        <button class="mx-auto" aria-label="Ungroup"><svg class="i16" viewBox="0 0 16 16"><path d="M0 .5h9" stroke="#ccc" stroke-dasharray="2 1"/><path d="M2 3h5v4H2z" fill="#f1eb8e" stroke="#222"/><circle cx="4.500" cy="12" r="2.500" fill="#eee"/><path d="M7 9l7-7 2 1-7 7z" fill="#f0ba4a"/><path d="M6 12l3-4 1 2z" fill="#d33"/></svg></button>
        <button class="mx-auto" aria-label="Group edit"><svg class="i16" viewBox="0 0 16 16"><path d="M.5.500h8v14h-8z" fill="none" stroke="#ccc" stroke-dasharray="1 1"/><path d="M2.500 2.500h4v4h-4z" fill="#222" stroke="#ddd"/><circle cx="4.500" cy="11" r="2" fill="#333" stroke="#6fa8f5"/><path d="M10 4.500h5M12.500 2v5M10 10.500h5" stroke="#ddd"/></svg></button>
        <button class="hot" aria-label="Group selection on/off"><svg class="i16" viewBox="0 0 16 16"><path d="M.5.500h9v14h-9z" fill="none" stroke="#a8cbff" stroke-dasharray="1 1"/><path d="M3 3h4v4H3z" fill="#f1eb8e" stroke="#222"/><path d="M3 9h4v4H3z" fill="#ddd" stroke="#222"/><path d="M8 2l6 8H11l2 4-2 1-1-4-2 2z" fill="#fbf7b5" stroke="#222" stroke-width=".7"/></svg></button>
      </div></div>
      <div class="ptitle d-flex align-items-center justify-content-center">Groups<i class="car car-lg"></i></div></div>

    <div class="panel p-util"><div class="pbody d-flex">
      <button class="big" style="width:70px"><svg class="i32" viewBox="0 0 32 32"><path d="M1.500 8v9M30.500 8v9M2 12.500h28M6 10l-4 2.500L6 15M26 10l4 2.500-4 2.500" stroke="#eee" fill="none"/><path d="M1.500 19.500h29v6h-29z" fill="#fbcf3c" stroke="#a46a12"/><path d="M5 19v3M9 19v3M13 19v3M17 19v3M21 19v3M25 19v3" stroke="#a46a12"/></svg><span class="lbl">Measure</span><i class="car"></i></button>
      <div class="tools" style="padding-left:2px">
        <button aria-label="Quick select"><svg class="i16" viewBox="0 0 16 16"><path d="M1.500 2.500h7v12h-7z" fill="#9a8" stroke="#1f9a2e" stroke-width="1.500"/><path d="M12 0l1 3 3-1-1 3-3 4-2-3-1-2 3-1z" fill="#ffa51f"/><path d="M6 4l5 7H9l1 4H8l-1-3-1 2z" fill="#fff" stroke="#222" stroke-width=".7"/></svg></button>
        <button aria-label="Point style"><svg class="i16" viewBox="0 0 16 16"><path d="M8.500 1v15M1 8.500h15" stroke="#ddd"/><circle cx="8.500" cy="8.500" r="2" fill="#eee"/></svg></button>
        <button aria-label="Calculator"><svg class="i16" viewBox="0 0 16 16"><rect x="3.500" y="1.500" width="10" height="13" fill="#f0f0f0" stroke="#222"/><path d="M5 3h7v2H5z" fill="#555"/><path d="M5 7.500h7M5 9.500h7M5 11.500h7" stroke="#555" stroke-dasharray="1 1"/></svg></button>
      </div></div>
      <div class="ptitle d-flex align-items-center justify-content-center">Utilities<i class="car car-lg"></i></div></div>

    <div class="panel p-clip"><div class="pbody d-flex">
      <button class="big" style="width:53px"><svg class="i32" viewBox="0 0 32 32"><path d="M4.500 3.500h22v24h-22z" fill="#a08a7c" stroke="#2e2824"/><path d="M7 5h14v22H7z" fill="#b9aca2"/><path d="M10 2h4q1-2 4 0h3v4H10z" fill="#fff" stroke="#222"/><path d="M11.500 9.500h12l5 5v16h-17z" fill="url(#gw)" stroke="#111"/><path d="M23.500 9.500v5h5" fill="#fff" stroke="#111"/></svg><span class="lbl">Paste</span><i class="car"></i></button>
      <div class="tools" style="padding-left:3px">
        <button aria-label="Cut"><svg class="i16" viewBox="0 0 16 16"><path d="M2 1l10 10M14 1L4 11" stroke="#fff" stroke-width="1.800"/><circle cx="3" cy="12.500" r="2" fill="none" stroke="#222" stroke-width="1.500"/><circle cx="13" cy="12.500" r="2" fill="none" stroke="#222" stroke-width="1.500"/></svg></button>
        <button aria-label="Copy clip"><svg class="i16" viewBox="0 0 16 16"><path d="M1 1h9v11H1z" fill="#eee" stroke="#444"/><path d="M5 3h7l4 4v8H5z" fill="url(#gw)" stroke="#444"/><path d="M12 3v4h4" fill="#fff" stroke="#444"/></svg></button>
      </div></div>
      <div class="ptitle d-flex align-items-center justify-content-center">Clipboard</div></div>

    <div class="panel p-view"><div class="pbody d-flex justify-content-center">
      <button class="big"><svg class="i32" viewBox="0 0 32 32"><path d="M3.500 6.500h11v6h15v13h-26z" fill="url(#gw)" stroke="#222"/></svg><span class="lbl">Base</span><i class="car"></i></button></div>
      <div class="ptitle d-flex align-items-center ps-1">View<i class="car car-lg"></i><svg width="8" height="8"><path d="M1 2l4 4M6 1v5H1" stroke="#ddd" fill="none"/></svg></div></div>
  </section>

  <nav class="ftabs d-flex">
    <div class="ftab"><svg class="shape" viewBox="0 0 128 22" preserveAspectRatio="none"><path d="M0 22Q6 20 8 8 10 0 16 0H110Q117 0 119 8 122 20 128 22z" fill="url(#gt)" stroke="#8a8a8a"/></svg>
      <div class="inner d-flex align-items-center justify-content-between"><span>Drawing1*</span><svg width="8" height="8" class="me-1"><path d="M1 1l6 6M7 1L1 7" stroke="#383838" stroke-width="2"/></svg></div></div>
    <button class="ms-1" aria-label="New drawing"><svg width="24" height="18" viewBox="0 0 24 18"><path d="M0 1h15q6 2 7 14H8Q3 12 0 1z" fill="#5a5a5a" stroke="#6a6a6a"/><path d="M6 8.500h9M10.500 4v9" stroke="#222" stroke-width="4"/><path d="M7 8.500h7M10.500 5v7" stroke="#ccc" stroke-width="2"/></svg></button>
  </nav>
  <div class="strip"></div>

  <section class="paper flex-grow-1">
    <svg class="draw" shape-rendering="crispEdges">
      <g id="grid"></g>
      <path d="M412.500 438.500H3000" stroke="#5c2730"/>
      <path d="M412.500 0V28" stroke="#1f7a24"/>
      <g stroke="#f00" fill="none"><path d="M412.500 27V438M499.500 27V438M557.500 27V438M616.500 27V438M703.500 27V438M412 233.500H704"/><path d="M412 438.500H704" stroke="#a31820"/></g>
      <g shape-rendering="auto" fill="none" stroke="#e00d0d" stroke-width="1.200"><path d="M412.500 27.500L703.500 438.500M703.500 27.500L412.500 438.500"/>
        <g stroke="#d01414"><circle cx="514.500" cy="233.500" r="6.500"/><path d="M505 224l19 19M524 224l-19 19"/><circle cx="601.500" cy="233.500" r="6.500"/><path d="M592 224l19 19M611 224l-19 19"/></g>
        <g stroke="#10e8e8"><circle cx="499.500" cy="233.500" r="6.500"/><path d="M490 224l19 19M509 224l-19 19"/><circle cx="532.500" cy="233" r="2.500"/><path d="M529 229l8 8M537 229l-8 8"/><circle cx="582.500" cy="233" r="2.500"/><path d="M579 229l8 8M587 229l-8 8"/></g></g>
      <g stroke="#fff" fill="none"><path d="M412.500 389V439.500H463"/><path d="M883.500 206v31M883.500 244v31M849 240.500h31M887 240.500h31M880.500 237.500h6v6h-6z"/></g>
      <g fill="#f4f4f4" font-family="Liberation Sans, sans-serif" font-size="19"><text x="414" y="385">Y</text><text x="467" y="438">X</text></g>
    </svg>
    <div class="vlabel">[−][Custom View][2D Wireframe]</div>
    <div class="mdi d-flex">
      <button aria-label="Minimize drawing"><svg width="12" height="12"><path d="M1 8.500h10" stroke="#eee" stroke-width="3"/></svg></button>
      <button aria-label="Restore drawing"><svg width="12" height="12"><path d="M4 1.500h7v7M2 4.500h6v6H2z" fill="none" stroke="#eee" stroke-width="2"/></svg></button>
      <button aria-label="Close drawing"><svg width="12" height="12"><path d="M2 2l8 8M10 2l-8 8" stroke="#eee" stroke-width="2.500"/></svg></button>
    </div>
    <svg class="cube" width="100" height="80" viewBox="0 0 100 80">
      <ellipse cx="50" cy="42" rx="39" ry="29" fill="none" stroke="#4a4f57" stroke-width="10"/>
      <rect x="31.500" y="4.500" width="37" height="37" fill="#b7b9bc" stroke="#cfd0d2"/><rect x="39" y="12" width="22" height="22" fill="#a9adb2"/>
      <g font-family="Liberation Sans, sans-serif" font-weight="700" fill="#b4b6ba" text-anchor="middle"><text x="50" y="27" font-size="10" fill="#3c4350">TOP</text>
      <text font-size="14" transform="translate(4 36) rotate(90)">S</text><text font-size="14" transform="translate(86 36) rotate(90)">N</text><text font-size="16" transform="translate(44 71) rotate(90)">E</text></g>
    </svg>
    <button class="ucsname d-flex align-items-center justify-content-between"><span>Unnamed</span><svg width="8" height="5"><path d="M0 0h8L4 5z" fill="none" stroke="#c2c2cc"/></svg></button>
    <svg class="navbar2" viewBox="0 0 32 212" fill="none" stroke="#3c3f43">
      <circle cx="26" cy="6" r="4" fill="#45484c"/><path d="M24 4l4 4M28 4l-4 4" stroke="#6c6f73"/>
      <path d="M5.500 31q0-11 11-11h10.500v11q0 10-10.500 10T5.500 31z" stroke-width="1.300"/><circle cx="16" cy="31" r="6"/><circle cx="16" cy="31" r="8.500"/>
      <path d="M13 50h6l-3 3zM13 119h6l-3 3zM13 158h6l-3 3z" fill="#2e3135" stroke="none"/><path d="M3 57.500h26M3 164.500h26" stroke="#6c6f73"/>
      <path d="M12 84L5 74q1-3 4 0l2 2-3-9q2-3 4 1l2 6V64q2-3 4 0l0 10 3-9q3-2 3 1l-2 9 3-5q3-1 2 2l-5 12z" stroke-width="1.200"/>
      <path d="M5 91l14 15M19 91L5 106M5 95v-4h4M15 91h4v4M5 102v4h4" stroke-width="1.300"/><circle cx="20" cy="105" r="5" fill="#5b5e62"/><path d="M24 108l4 4" stroke-width="3"/>
      <path d="M14 149v-16h-3l5-5 5 5h-3v16z"/><ellipse cx="16" cy="141" rx="11" ry="4.500"/><path d="M11 141v7l-6-4z" fill="#3c3f43"/>
      <path d="M4.500 170.500h6v6h-6zM12.500 170.500h6v6h-6zM20.500 170.500h6v6h-6zM4.500 179.500h16v13h-16z"/><path d="M9 182l7 4-7 4z" fill="#3c3f43"/>
      <circle cx="26" cy="206" r="4" fill="#45484c"/><path d="M24 206h4" stroke="#777"/>
    </svg>
    <div class="cmdwrap d-flex justify-content-center"><div class="cmd d-flex">
      <div class="cmdleft d-flex align-items-center"><svg width="6" height="18"><path d="M1 0v18M4.500 0v18" stroke="#aaa" stroke-width="2" stroke-dasharray="2 1"/></svg>
        <button class="ms-1" aria-label="Close command line"><svg width="9" height="9"><path d="M0 0l9 9M9 0L0 9" stroke="#ddd" stroke-width="1.800"/></svg></button>
        <button class="ms-1" aria-label="Customize command line"><svg width="15" height="15" viewBox="0 0 15 15"><path d="M1 4l3 1 1-2-2-2q4-1 5 3l6 7q1 3-2 3L6 8Q1 8 1 4z" fill="none" stroke="#d0d0d0" stroke-width="1.200"/></svg></button></div>
      <div class="cmdin flex-grow-1 d-flex align-items-center">
        <svg width="15" height="14"><rect x=".5" y=".5" width="14" height="13" fill="#a6adba" stroke="#6d7480"/><path d="M3 4l4 3-4 3M8 10.500h5" stroke="#222" fill="none"/></svg><i class="car ms-1" style="border-top-color:#6f7173"></i>
        <input class="flex-grow-1 ms-2" type="text" placeholder="Type a command" aria-label="Command"><svg width="8" height="5"><path d="M0 5h8L4 0z" fill="#1b1b1b"/></svg></div>
    </div></div>
  </section>

  <footer class="status d-flex justify-content-between">
    <div class="d-flex ps-2">
      <button class="ltab t12 fw-bold text-white"><svg class="shape" viewBox="0 0 66 17" preserveAspectRatio="none"><path d="M0 0q5 1 7 8 2 9 7 9H50q5 0 8-9 2-7 7-8z" fill="#777"/></svg><span>Model</span></button>
      <button class="ltab t12"><svg class="shape" viewBox="0 0 66 17" preserveAspectRatio="none"><path d="M0 0q3 17 8 17H54q6 0 11-17z" fill="#5a5a5a"/></svg><span>Layout1</span></button>
      <button class="ltab t12"><svg class="shape" viewBox="0 0 66 17" preserveAspectRatio="none"><path d="M0 0q3 17 8 17H54q6 0 11-17z" fill="#5a5a5a"/></svg><span>Layout2</span></button>
      <button class="ms-1 align-self-start" aria-label="New layout"><svg width="22" height="16"><path d="M0 15Q1 2 7 0h15q0 12-7 15z" fill="#555"/><path d="M7 8h8M11 4v8" stroke="#222" stroke-width="4"/><path d="M8 8h6M11 5v6" stroke="#ccc" stroke-width="2"/></svg></button>
    </div>
    <div class="d-flex">
      <button class="sgrp t12 text-white" style="width:49px">MODEL</button>
      <div class="sgrp" style="width:65px">
        <button aria-label="Grid"><svg width="16" height="16"><path d="M2.500 0v16M6.500 0v16M10.500 0v16M14.500 0v16M0 3.500h16M0 8.500h16M0 12.500h16" stroke="#2f8bff" stroke-dasharray="2 1"/></svg></button>
        <button aria-label="Snap"><svg width="16" height="16"><path d="M1 1.500h15M1 4.500h15M1 7.500h15M1 10.500h15M1 13.500h15" stroke="#2f8bff" stroke-dasharray="2 1"/></svg></button><i class="car car-lg"></i></div>
      <div class="sgrp" style="width:104px;margin-right:0">
        <button aria-label="Ortho"><svg width="14" height="14"><path d="M1.500 1v12H14M1.500 8.500h4v4" stroke="#c4c4c4" fill="none"/></svg></button>
        <button aria-label="Polar"><svg width="16" height="16"><path d="M11 3a6 6 0 1 0 2 6M7.500 8.500H16M7.500 8.500l6-7" stroke="#b8b8b8" fill="none" stroke-width="1.300"/></svg></button><i class="car car-lg"></i>
        <button aria-label="Isometric"><svg width="18" height="20"><path d="M9.500 1v18M1 2l16 16" stroke="#a8a8a8" stroke-width="1.300"/></svg></button><i class="car car-lg"></i></div>
      <div class="sgrp" style="width:64px">
        <button aria-label="Object tracking"><svg width="16" height="14"><path d="M0 12.500h16M1 12L11 1M5 5l3 3" stroke="#bdbdbd" stroke-width="1.300"/></svg></button>
        <button aria-label="Object snap"><svg width="17" height="17"><path d="M3.500 3.500h12v12h-12z" fill="none" stroke="#2b93ff" stroke-width="1.500"/><path d="M1.500 1.500h4v4h-4z" fill="#0f0" stroke="#053b05" stroke-width="1.500"/></svg></button><i class="car car-lg"></i></div>
      <div class="sgrp" style="width:107px">
        <button aria-label="Annotation visibility"><svg width="17" height="17"><use href="#compass"/><circle cx="13" cy="4" r="3" fill="#4f4f4f" stroke="#bdbdbd"/></svg></button>
        <button aria-label="Auto scale"><svg width="17" height="17"><use href="#compass"/><path d="M13 0l-3 5h3l-2 4 6-5h-3l2-4z" fill="#bdbdbd"/></svg></button>
        <button aria-label="Annotation scale icon"><svg width="17" height="17"><use href="#compass"/></svg></button>
        <button class="d-flex align-items-center gap-1">1:1<i class="car car-lg"></i></button></div>
      <button class="sgrp me-0" style="width:40px" aria-label="Workspace"><svg width="14" height="14" viewBox="0 0 14 14"><circle cx="7" cy="7" r="5.500" fill="none" stroke="#c4c4c4" stroke-width="2.500" stroke-dasharray="2.500 1.820"/><circle cx="7" cy="7" r="3.500" fill="none" stroke="#c4c4c4" stroke-width="3"/></svg><i class="car car-lg"></i></button>
      <button class="sgrp" style="width:26px" aria-label="Annotation monitor"><svg width="14" height="14"><path d="M0 7h14M7 0v14" stroke="#c8c8c8" stroke-width="1.800"/></svg></button>
      <button class="sgrp" style="width:26px" aria-label="Hardware acceleration"><svg width="18" height="18"><circle cx="9" cy="9" r="7.500" fill="#0f62b5" stroke="#1e90ff" stroke-width="1.500"/><path d="M8 11l6-3" stroke="#59b4ff" stroke-width="1.500"/></svg></button>
      <button class="sgrp" style="width:32px" aria-label="Isolate objects"><svg width="16" height="16"><path d="M1.500 1.500h6v6h-6zM4 14.500h6L7 9.500z" fill="none" stroke="#c4c4c4"/><circle cx="12" cy="6.500" r="3" fill="none" stroke="#c4c4c4"/></svg></button>
      <div class="sgrp me-0" style="width:51px"><button aria-label="Clean screen"><svg width="16" height="12"><rect x=".7" y=".7" width="14.600" height="10.600" fill="none" stroke="#d0d0d0" stroke-width="1.300"/><path d="M3 9V5l4 4zM13 3H9l4 4z" fill="#ddd"/></svg></button><button aria-label="Customization"><svg width="15" height="12"><path d="M0 1h15M0 6h15M0 11h15" stroke="#ccc" stroke-width="1.800"/></svg></button></div>
    </div>
  </footer>
</main>
<div class="edge"></div>
</div>
<div class="gapline"></div>

<nav class="taskbar d-flex justify-content-between">
  <div class="d-flex">
    <button class="startb d-flex align-items-center ps-2" aria-label="Start"><svg width="30" height="28" viewBox="0 0 30 28"><path d="M4 5l11-1.500V13H4zM16 3.300L30 1v12H16zM4 14h11v9.500L4 22zM16 14h14v12l-14-2z" fill="#fff"/></svg></button>
    <button class="tb run" aria-label="File Explorer"><svg width="32" height="30" viewBox="0 0 32 30"><path d="M1 3q0-2 2-2h7l2 3h6l2-1h9q2 0 2 3v20H1z" fill="#e5c669" stroke="#a98b36" stroke-width=".6"/><path d="M5 2h4v2H5z" fill="#4aa33f"/><path d="M13 4h4v2h-4z" fill="#d84b31"/><path d="M22 6h4v2h-4z" fill="#3f8fd8"/><path d="M1 9h30v19H1z" fill="#f7e6a4"/><path d="M5 29v-8q0-4 5-4h13q5 0 5 4v8h-6v-5H11v5z" fill="#8ec9ea" stroke="#4b91bd"/></svg></button>
    <button class="tb" aria-label="Store"><svg width="30" height="30"><path d="M0 0h30v30H0z" fill="#0a8a0a"/><path d="M4 10l20-2 1 16-21 2z" fill="#fff"/><path d="M9 10q0-6 4-6t4 5M14 8q1-5 4-4 3 1 3 5" fill="none" stroke="#fff" stroke-width="1.500"/><path d="M7 13l5-.5v4.500H7zM13 12.400l5-.5V17h-5zM7 18h5v4.500L7 22zM13 18h5v5l-5-.5z" fill="#0a8a0a"/></svg></button>
    <button class="tb" aria-label="Downloader"><svg width="28" height="28"><circle cx="16" cy="15" r="10" fill="url(#globe)"/><path d="M15 8q6 1 8 6-3 6-5 3t-4-4z" fill="#a9dd3c"/><path d="M4 13Q6 1 17 2l6 3-7 3q-4 2-4 10h3l-7 8-7-9h3z" fill="#e8d817"/><path d="M4 13Q6 1 17 2l6 3-7 3q-4 2-5 6z" fill="#e03325"/></svg></button>
    <button class="tb" aria-label="Sketch map"><svg width="30" height="30"><path d="M5 1h24v24l-5 3z" fill="#caa83c"/><path d="M4 2l22-1-2 27L1 25z" fill="#e7dfcc" stroke="#8a7b55"/><path d="M5 17q7-12 15 2M6 8l14 12M11 20l7-12" stroke="#555" fill="none"/><circle cx="19" cy="8" r="3.500" fill="#3c4f63"/><circle cx="8" cy="21" r="3.500" fill="#3c4f63"/></svg></button>
    <button class="tb" aria-label="Web search"><svg width="32" height="32"><circle cx="16" cy="16" r="15" fill="url(#globe)" stroke="#0a3a6a"/><path d="M4 12Q8 4 16 3q-2 5-6 6zM22 6q6 4 7 11l-6-3zM6 24q4-4 9 4z" fill="#3e9a3a"/><circle cx="16" cy="14" r="8.500" fill="#a9ddf5" stroke="#e8eef2" stroke-width="2"/><path d="M10 12q3-5 7-4l-3 5zM17 15l4-3-1 6z" fill="#58b86a"/><path d="M22 21l8 9" stroke="#d87f35" stroke-width="3.500"/></svg></button>
    <button class="tb act" aria-label="AutoCAD"><svg width="32" height="32"><path d="M0 0h32v32H0z" fill="#f2d6d9"/><path d="M0 0h32v14L0 20z" fill="#fbf3f4"/><use href="#acad" x="5" y="3" width="22" height="24"/></svg></button>
    <button class="tb run" aria-label="Paint"><svg width="32" height="32"><path d="M3 25Q-2 10 12 6q14-4 17 7 1 12-12 16-4 0-4-4-5-3-10 0z" fill="#b8e0f4" stroke="#5a9cc4"/><circle cx="7" cy="17" r="2.500" fill="#d9412c"/><circle cx="12" cy="12" r="2.500" fill="#59b545"/><circle cx="19" cy="9" r="2.500" fill="#f4b52b"/><circle cx="15" cy="19" r="2.500" fill="#4f6e86"/><path d="M16 31l7-20 3 1-7 18z" fill="#ec8c2e"/><path d="M23 9l3-8 6 3-6 7z" fill="#c9a67d"/></svg></button>
    <button class="tb run" aria-label="Internet Explorer"><svg width="30" height="30"><path d="M0 0h30v30H0z" fill="#2672ec"/><path d="M22 19q-2 4-6 4-6 0-6-7 0-6 6-6 7 0 7 6H11" fill="none" stroke="#fff" stroke-width="3.500"/><path d="M9 11Q20 1 25 5q1 3-1 6M8 14Q1 26 6 26q4 1 9-3" fill="none" stroke="#fff" stroke-width="1.800"/></svg></button>
  </div>
  <div class="tray d-flex align-items-center">
    <svg width="9" height="5"><path d="M0 5h9L4.500 0z" fill="#eee"/></svg>
    <svg class="ms-1" width="16" height="16"><circle cx="8" cy="8" r="6" fill="#f7a823" stroke="#fff" stroke-width="2"/><path d="M1 9A7 7 0 0 1 13 3" stroke="#1f6ad0" stroke-width="2" fill="none"/><circle cx="12" cy="12" r="4" fill="#d9262c"/><path d="M10 10l4 4M14 10l-4 4" stroke="#fff"/></svg>
    <svg width="16" height="16"><path d="M1.500 1v15" stroke="#fff" stroke-width="2"/><path d="M3 2q4-1 6 1 3 1 6 0-1 5-5 6-3-2-7-1z" fill="#fff"/></svg>
    <svg width="16" height="16"><path d="M8 3h6v12H8zM10 1h2v2" fill="none" stroke="#fff" stroke-width="1.500"/><path d="M9 9h4v5H9zM0 4h6v3q-1 2-2 2v6H2V9Q0 8 0 7zM1 1h1v3H1zM4 1h1v3H4z" fill="#fff"/></svg>
    <svg width="16" height="16"><path d="M1.500 13v2M4.500 11v4M7.500 8v7M10.500 6v9M13.500 3v12" stroke="#fff" stroke-width="2"/></svg>
    <svg width="16" height="16"><path d="M1 5h3l4-4v14l-4-4H1z" fill="#fff"/><path d="M10 5q2 3 0 6M12 3q4 5 0 10" stroke="#fff" fill="none"/></svg>
    <span class="t12 ms-1">POR</span>
    <div class="clock ms-1">10:24<br>05/11/2014</div>
  </div>
</nav>

<script>
  // Model-space grid: a minor line every 29.1 px, a major one every fifth, upward from the origin.
  // Columns 3, 5 and 10 carry drawn lines below y = 27, so their grid line ends there.
  const ns = 'http://www.w3.org/2000/svg', step = 29.1, x0 = 412, y0 = 438, drawn = [3, 5, 10];
  const paths = { minor: '', major: '' };
  for (let i = 1; i < 60; i++) paths[i % 5 ? 'minor' : 'major'] += `M${Math.floor(x0 + i * step) + .5} 2V${drawn.includes(i) ? 27 : y0}`;
  for (let i = 1; i <= 15; i++) paths[i % 5 ? 'minor' : 'major'] += `M${x0} ${Math.round(y0 - i * step) + .5}H3000`;
  for (const [kind, color] of [['minor', '#272e39'], ['major', '#343c4b']]) {
    const p = document.createElementNS(ns, 'path');
    p.setAttribute('d', paths[kind]); p.setAttribute('stroke', color);
    document.getElementById('grid').append(p);
  }
</script>
<script src="https://cdn.jsdelivr.net/npm/bootstrap@5.3.0/dist/js/bootstrap.bundle.min.js"></script>
</body>
</html>
